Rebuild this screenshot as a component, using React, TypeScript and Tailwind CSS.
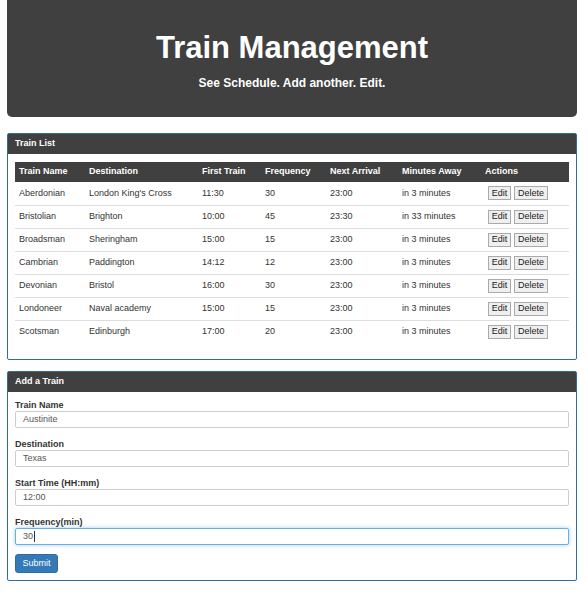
import React from 'react';

const trains = [
  { name: 'Aberdonian', dest: "London King's Cross", first: '11:30', freq: '30', next: '23:00', away: 'in 3 minutes' },
  { name: 'Bristolian', dest: 'Brighton', first: '10:00', freq: '45', next: '23:30', away: 'in 33 minutes' },
  { name: 'Broadsman', dest: 'Sheringham', first: '15:00', freq: '15', next: '23:00', away: 'in 3 minutes' },
  { name: 'Cambrian', dest: 'Paddington', first: '14:12', freq: '12', next: '23:00', away: 'in 3 minutes' },
  { name: 'Devonian', dest: 'Bristol', first: '16:00', freq: '30', next: '23:00', away: 'in 3 minutes' },
  { name: 'Londoneer', dest: 'Naval academy', first: '15:00', freq: '15', next: '23:00', away: 'in 3 minutes' },
  { name: 'Scotsman', dest: 'Edinburgh', first: '17:00', freq: '20', next: '23:00', away: 'in 3 minutes' },
];

function Field({ label, value, focused }: { label: string; value: string; focused?: boolean }) {
  return (
    <div className="mb-[10px]">
      <label className="block text-[9px] leading-[12px] font-bold text-[#333]">{label}</label>
      <div
        className={`h-[17px] flex items-center pl-[7px] rounded-[2px] bg-white text-[9px] text-[#555] border ${
          focused ? 'border-[#66afe9] shadow-[0_0_4px_rgba(102,175,233,0.6)]' : 'border-[#ccc]'
        }`}
      >
        {value}
        {focused && <span className="inline-block w-px h-[11px] bg-[#333] ml-px" />}
      </div>
    </div>
  );
}

export default function App() {
  return (
    <div className="w-[588px] min-h-[611px] bg-white font-['Liberation_Sans',Arial,sans-serif]">
      {/* Header */}
      <div className="mx-[7px] w-[570px] h-[117px] bg-[#404040] rounded-b-[5px] flex flex-col items-center text-white">
        <h1 className="mt-[28px] text-[31px] leading-[40px] font-bold">Train Management</h1>
        <p className="mt-[8px] text-[12px] leading-[14px] font-bold">See Schedule. Add another. Edit.</p>
      </div>

      {/* Train list */}
      <div className="mx-[7px] mt-[16px] w-[570px] border border-[#2e6da4] rounded-[2px]">
        <div className="h-[20px] bg-[#404040] text-white text-[9px] font-bold flex items-center pl-[7px]">Train List</div>
        <div className="px-[7px] pt-[8px] pb-[16px]">
          <table className="w-full table-fixed text-[9px] text-[#333]">
            <thead>
              <tr className="bg-[#404040] text-white font-bold text-left h-[20px]">
                <th className="w-[70px] pl-[4px]">Train Name</th>
                <th className="w-[113px] pl-[4px]">Destination</th>
                <th className="w-[63px] pl-[4px]">First Train</th>
                <th className="w-[65px] pl-[4px]">Frequency</th>
                <th className="w-[72px] pl-[4px]">Next Arrival</th>
                <th className="w-[83px] pl-[4px]">Minutes Away</th>
                <th className="pl-[4px]">Actions</th>
              </tr>
            </thead>
            <tbody>
              {trains.map((t, i) => (
                <tr key={t.name} className={`h-[23px] ${i > 0 ? 'border-t border-[#ddd]' : ''}`}>
                  <td className="pl-[4px]">{t.name}</td>
                  <td className="pl-[4px]">{t.dest}</td>
                  <td className="pl-[4px]">{t.first}</td>
                  <td className="pl-[4px]">{t.freq}</td>
                  <td className="pl-[4px]">{t.next}</td>
                  <td className="pl-[4px]">{t.away}</td>
                  <td className="pl-[7px]">
                    <div className="flex gap-[3px] items-center">
                      <span className="h-[14px] w-[23px] flex items-center justify-center bg-[#efefef] border border-[#aaa] text-[9px] text-[#222]">Edit</span>
                      <span className="h-[14px] w-[34px] flex items-center justify-center bg-[#efefef] border border-[#aaa] text-[9px] text-[#222]">Delete</span>
                    </div>
                  </td>
                </tr>
              ))}
            </tbody>
          </table>
        </div>
      </div>

      {/* Add form */}
      <div className="mx-[7px] mt-[11px] w-[570px] border border-[#2e6da4] rounded-[2px]">
        <div className="h-[20px] bg-[#404040] text-white text-[9px] font-bold flex items-center pl-[7px]">Add a Train</div>
        <div className="px-[7px] pt-[7px] pb-[7px]">
          <Field label="Train Name" value="Austinite" />
          <Field label="Destination" value="Texas" />
          <Field label="Start Time (HH:mm)" value="12:00" />
          <Field label="Frequency(min)" value="30" focused />
          <button className="block mt-[-1px] h-[19px] w-[43px] rounded-[3px] bg-[#337ab7] border border-[#2e6da4] text-white text-[9px]">Submit</button>
        </div>
      </div>
    </div>
  );
}
